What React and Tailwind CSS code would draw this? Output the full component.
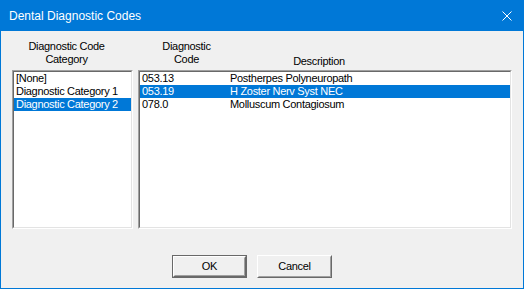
// Dental Diagnostic Codes dialog (classic Win32 look)

const categories = ['[None]', 'Diagnostic Category 1', 'Diagnostic Category 2']

const codes = [
  { code: '053.13', desc: 'Postherpes Polyneuropath' },
  { code: '053.19', desc: 'H Zoster Nerv Syst NEC' },
  { code: '078.0', desc: 'Molluscum Contagiosum' },
]

function Sunken({ className, children }) {
  return (
    <div className={`border border-t-[#a0a0a0] border-l-[#a0a0a0] border-b-white border-r-white ${className}`}>
      <div className="h-full border border-t-[#696969] border-l-[#696969] border-b-[#e3e3e3] border-r-[#e3e3e3] bg-white">
        {children}
      </div>
    </div>
  )
}

function Button({ label, isDefault }) {
  const inner = (
    <div className="h-full border border-t-white border-l-white border-b-[#696969] border-r-[#696969]">
      <div className="h-full flex items-center justify-center border border-t-[#f0f0f0] border-l-[#f0f0f0] border-b-[#a0a0a0] border-r-[#a0a0a0] bg-[#f0f0f0]">
        {label}
      </div>
    </div>
  )
  return isDefault ? (
    <div className="w-[75px] h-[23px] border border-[#696969]">{inner}</div>
  ) : (
    <div className="w-[75px] h-[23px]">{inner}</div>
  )
}

export default function App() {
  return (
    <div className="w-[524px] h-[289px] flex flex-col bg-[#0078d7] pb-px px-px">
      {/* Title bar */}
      <div className="h-[31px] shrink-0 flex items-center justify-between pl-[8px] pr-[11px] pt-px text-white text-[12px] font-['Liberation_Sans',Arial,sans-serif]">
        <span>Dental Diagnostic Codes</span>
        <svg width="10" height="10" viewBox="0 0 10 10">
          <path d="M0.5 0.5L9.5 9.5M9.5 0.5L0.5 9.5" stroke="white" strokeWidth="1" />
        </svg>
      </div>

      {/* Body */}
      <div className="flex-1 flex flex-col bg-[#f0f0f0] px-[11px] text-[11px] leading-[13px] tracking-[-0.3px] text-black font-['Liberation_Sans',Arial,sans-serif]">
        {/* Headers */}
        <div className="h-[39px] shrink-0 flex pt-[9px]">
          <div className="w-[109px] text-center">
            Diagnostic Code
            <br />
            Category
          </div>
          <div className="w-[97px] ml-[17px] text-center">
            Diagnostic
            <br />
            Code
          </div>
          <div className="w-[168px] text-center pt-[15px]">Description</div>
        </div>

        {/* Lists */}
        <div className="h-[159px] shrink-0 flex gap-[5px]">
          <Sunken className="w-[121px]">
            {categories.map((c, i) => (
              <div
                key={c}
                className={`h-[13px] pl-[2px] whitespace-nowrap ${i === 2 ? 'bg-[#0078d7] text-white' : ''}`}
              >
                {c}
              </div>
            ))}
          </Sunken>
          <Sunken className="w-[374px]">
            {codes.map((r, i) => (
              <div
                key={r.code}
                className={`h-[13px] flex pl-[2px] whitespace-nowrap ${i === 1 ? 'bg-[#0078d7] text-white' : ''}`}
              >
                <span className="w-[88px]">{r.code}</span>
                <span>{r.desc}</span>
              </div>
            ))}
          </Sunken>
        </div>

        {/* Buttons */}
        <div className="flex gap-[10px] pl-[160px] pt-[26px]">
          <Button label="OK" isDefault />
          <Button label="Cancel" />
        </div>
      </div>
    </div>
  )
}
